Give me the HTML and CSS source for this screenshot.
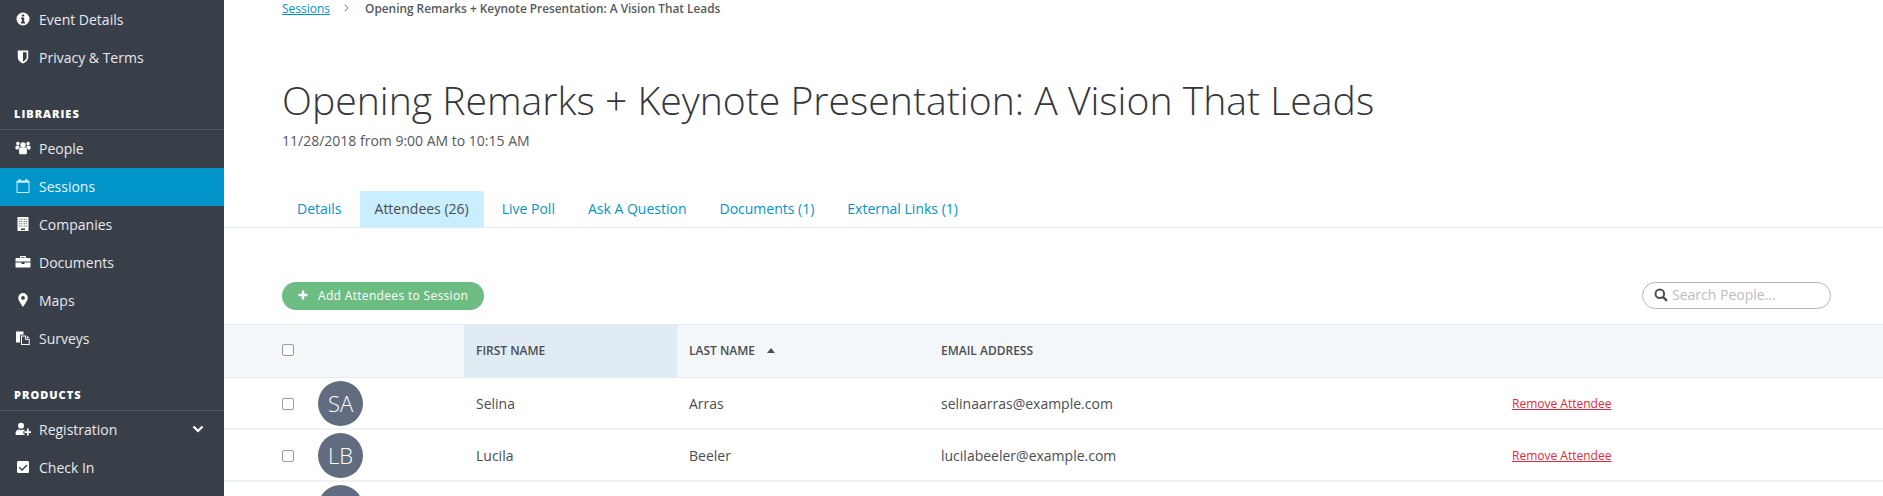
FILE: index.html
```html
<!DOCTYPE html>
<html lang="en">
<head>
<meta charset="utf-8">
<title>Session Attendees</title>
<link rel="stylesheet" href="styles.css">
</head>
<body>
<div class="app">
  <nav class="sidebar">
    <ul class="nav first">
      <li class="item"><svg class="ico" viewBox="0 0 16 16"><path fill="#fff" fill-rule="evenodd" d="M8 1.500a6.500 6.500 0 1 0 0 13 6.500 6.500 0 0 0 0-13zM6.800 3.400h2.400v2.100H6.800zM6 6.500h3.200v4.600h.9v1.500H5.900v-1.500h.9V8H6z"/></svg><span>Event Details</span></li>
      <li class="item"><svg class="ico" viewBox="0 0 16 16"><path fill="#fff" fill-rule="evenodd" d="M2.800 1.500h10.400v6.800c0 3-2.500 5.200-5.200 6.200-2.700-1-5.200-3.200-5.200-6.200zM8 3.200v9.500c1.900-.9 3.600-2.400 3.600-4.400V3.200z"/></svg><span>Privacy &amp; Terms</span></li>
    </ul>
    <h2 class="section">LIBRARIES</h2>
    <ul class="nav">
      <li class="item"><svg class="ico" viewBox="0 0 16 16"><g fill="#fff"><circle cx="8" cy="5" r="2.700"/><circle cx="2.900" cy="3.600" r="1.800"/><circle cx="13.100" cy="3.600" r="1.800"/><path d="M4.100 9.300c0-1 .8-1.700 1.700-1.700h4.400c.9 0 1.700.7 1.700 1.700v4c0 .5-.4.900-.9.900H5c-.5 0-.9-.4-.9-.9z"/><path d="M.5 7c0-.8.600-1.300 1.300-1.300h2.300c.2.800.6 1.300 1 1.600-1.100.3-1.700 1.100-1.700 2.200H1.300c-.5 0-.8-.3-.8-.8zM15.500 7c0-.8-.6-1.300-1.300-1.300h-2.300c-.2.800-.6 1.300-1 1.600 1.100.3 1.700 1.100 1.700 2.200h2.100c.5 0 .8-.3.800-.8z"/></g></svg><span>People</span></li>
      <li class="item active"><svg class="ico" viewBox="0 0 16 16"><g fill="#cdeefb"><path fill-rule="evenodd" d="M1.500 3.500c0-.6.400-1 1-1h11c.6 0 1 .4 1 1V14c0 .6-.4 1-1 1h-11c-.6 0-1-.4-1-1zM2.500 4.800V14h11V4.800z"/><rect x="3.700" y="1" width="2" height="3" rx=".8"/><rect x="10.300" y="1" width="2" height="3" rx=".8"/></g></svg><span>Sessions</span></li>
      <li class="item"><svg class="ico" viewBox="0 0 16 16"><path fill="#fff" fill-rule="evenodd" d="M2.500 1h11v14h-11zM6 12.600v1.400h4v-1.400zM4.300 2.700v1h1v-1zM6.300 2.700v1h1v-1zM8.700 2.700v1h1v-1zM10.700 2.700v1h1v-1zM4.300 5v1h1V5zM6.300 5v1h1V5zM8.700 5v1h1V5zM10.700 5v1h1V5zM4.300 7.300v1h1v-1zM6.300 7.300v1h1v-1zM8.700 7.300v1h1v-1zM10.700 7.300v1h1v-1zM4.300 9.600v1h1v-1zM6.300 9.600v1h1v-1zM8.700 9.600v1h1v-1zM10.700 9.600v1h1v-1z"/></svg><span>Companies</span></li>
      <li class="item"><svg class="ico" viewBox="0 0 16 16"><g fill="#fff"><path d="M5 4V2.800c0-.5.400-.8.800-.8h4.400c.4 0 .8.300.8.800V4h-1.300V3.200H6.300V4z"/><path d="M.5 5c0-.6.400-1 1-1h13c.6 0 1 .4 1 1v2.600H.5z"/><path d="M.5 8.500h6V10h3V8.500h6v4c0 .6-.4 1-1 1h-13c-.6 0-1-.4-1-1z"/></g></svg><span>Documents</span></li>
      <li class="item"><svg class="ico" viewBox="0 0 16 16"><path fill="#fff" fill-rule="evenodd" d="M8 1a4.800 4.800 0 0 0-4.800 4.800c0 2.500 3 6.700 4.800 9.200 1.800-2.500 4.800-6.700 4.800-9.200A4.800 4.800 0 0 0 8 1zm0 3a1.900 1.900 0 1 1 0 3.800A1.900 1.900 0 0 1 8 4z"/></svg><span>Maps</span></li>
      <li class="item"><svg class="ico" viewBox="0 0 16 16"><g fill="#fff"><path d="M1 1.500h7.500v3H6.300C5.600 4.500 5 5 5 5.800v6.700H1z"/><path fill-rule="evenodd" d="M6 5.500h5v3.300h3.700V15H6zM7 6.500V14h6.700V9.800H10V6.500z"/><path d="M11.800 5.700l2.700 2.300h-2.700z"/></g></svg><span>Surveys</span></li>
    </ul>
    <h2 class="section">PRODUCTS</h2>
    <ul class="nav">
      <li class="item"><svg class="ico" viewBox="0 0 16 16"><g fill="#fff"><circle cx="6" cy="4.800" r="3"/><path d="M.5 12.800c0-2.600 1.700-4.300 3.300-4.300.7.400 1.400.6 2.200.6s1.500-.2 2.200-.6c.5 0 1 .2 1.400.5v1.300H8.300v2.400h1.300v1.300H1.500c-.6 0-1-.4-1-1.200z"/><path d="M12 7.500h1.700v2.700h2.300v1.700h-2.300v2.600H12v-2.600H9.400v-1.700H12z"/></g></svg><span>Registration</span><svg class="chev" viewBox="0 0 12 8"><path d="M1.500 1.500L6 6l4.500-4.500" fill="none" stroke="#fff" stroke-width="2.200"/></svg></li>
      <li class="item"><svg class="ico" viewBox="0 0 16 16"><path fill="#fff" fill-rule="evenodd" d="M3.500 2h9c1 0 1.500.6 1.500 1.500v9c0 1-.6 1.500-1.500 1.500h-9C2.500 14 2 13.400 2 12.500v-9C2 2.500 2.600 2 3.500 2zm8 3.600L7 10 4.800 7.800l-1 1 3.200 3.200 5.500-5.500z"/></svg><span>Check In</span></li>
    </ul>
  </nav>

  <main class="main">
    <div class="crumbs"><a class="crumb-link" href="#">Sessions</a><svg class="crumb-sep" viewBox="0 0 5 8"><path d="M.8.8L4 4 .8 7.200" fill="none" stroke="#666" stroke-width=".9"/></svg><span class="crumb-current">Opening Remarks + Keynote Presentation: A Vision That Leads</span></div>
    <h1 class="title">Opening Remarks + Keynote Presentation: A Vision That Leads</h1>
    <p class="date">11/28/2018 from 9:00 AM to 10:15 AM</p>
    <div class="tabs">
      <a class="tab" href="#">Details</a>
      <a class="tab selected" href="#">Attendees (26)</a>
      <a class="tab" href="#">Live Poll</a>
      <a class="tab" href="#">Ask A Question</a>
      <a class="tab" href="#">Documents (1)</a>
      <a class="tab" href="#">External Links (1)</a>
    </div>
    <div class="toolbar">
      <button class="add-btn"><svg class="plus" viewBox="0 0 10 10"><path d="M5 .5v9M.5 5h9" stroke="#fff" stroke-width="2.400"/></svg>Add Attendees to Session</button>
      <label class="search"><svg class="search-ico" viewBox="0 0 14 14"><circle cx="5.800" cy="5.800" r="4.300" fill="none" stroke="#4a4d52" stroke-width="2"/><path d="M8.900 8.900l4 4" stroke="#4a4d52" stroke-width="2.200"/></svg><span class="placeholder">Search People...</span></label>
    </div>
    <div class="table">
      <div class="row head">
        <div class="cell check-cell"><span class="box"></span></div>
        <div class="cell sorted">FIRST NAME</div>
        <div class="cell">LAST NAME<svg class="caret" viewBox="0 0 8 5"><path d="M4 0l4 5H0z" fill="#4a4d52"/></svg></div>
        <div class="cell">EMAIL ADDRESS</div>
        <div class="cell"></div>
      </div>
      <div class="row">
        <div class="cell check-cell"><span class="box"></span><span class="avatar">SA</span></div>
        <div class="cell">Selina</div>
        <div class="cell">Arras</div>
        <div class="cell">selinaarras@example.com</div>
        <div class="cell"><a class="remove" href="#">Remove Attendee</a></div>
      </div>
      <div class="row">
        <div class="cell check-cell"><span class="box"></span><span class="avatar">LB</span></div>
        <div class="cell">Lucila</div>
        <div class="cell">Beeler</div>
        <div class="cell">lucilabeeler@example.com</div>
        <div class="cell"><a class="remove" href="#">Remove Attendee</a></div>
      </div>
      <div class="row">
        <div class="cell check-cell"><span class="avatar spacer"></span></div>
      </div>
    </div>
  </main>
</div>
</body>
</html>
```
FILE: styles.css
```css
* { box-sizing: border-box; }
html, body { margin: 0; height: 496px; overflow: hidden; }
body { font-family: "Open Sans", sans-serif; color: #4a4d52; background: #fff; }
.app { display: flex; height: 496px; overflow: hidden; }

.sidebar { flex: 0 0 224px; background: #393f49; color: #fff; }
.nav { list-style: none; margin: 0; padding: 0; }
.item { display: flex; align-items: center; height: 38px; padding: 0 0 2px 15px; font-size: 14px; color: #e8eaed; }
.item.active { background: #0094c8; color: #e6f6fc; }
.ico { width: 16px; height: 16px; margin-right: 8px; flex: none; }
.chev { width: 12px; height: 8px; margin-left: auto; margin-right: 20px; }
.section { margin: 23px 0 0; padding: 0 0 0 14px; height: 30px; line-height: 28px; font-size: 11px; font-weight: 800; letter-spacing: 1px; color: #fff; border-bottom: 1px solid #525863; }
.nav:first-child { padding-top: 1px; }

.main { flex: 1; min-width: 0; }
.crumbs { display: flex; align-items: center; height: 16px; padding-left: 58px; font-size: 12px; }
.crumb-link { color: #0094c8; }
.crumb-sep { width: 5px; height: 8px; margin: 0 16px 0 14px; flex: none; }
.crumb-current { font-size: 11.85px; font-weight: 600; color: #55585c; }
.title { margin: 62px 0 0 58px; font-size: 39.15px; line-height: 44px; font-weight: 300; color: #33363b; white-space: nowrap; }
.date { margin: 9px 0 0 58px; font-size: 14px; line-height: 20px; color: #55585c; }

.tabs { display: flex; margin-top: 40px; padding-left: 58px; height: 37px; border-bottom: 1px solid #e4ebf2; }
.tab { display: block; padding: 0 15px; margin-right: 3px; height: 36px; line-height: 36px; font-size: 14px; color: #0094c8; text-decoration: none; border-radius: 2px 2px 0 0; }
.tab.selected { background: #c9eefd; color: #4a4d52; }

.toolbar { display: flex; justify-content: space-between; align-items: flex-start; padding: 54px 52px 0 58px; height: 96px; }
.add-btn { display: flex; align-items: center; height: 28px; width: 202px; padding: 0 0 2px 16px; border: 0; border-radius: 14px; background: #6dbd83; color: #fff; font: 12px "Open Sans", sans-serif; letter-spacing: .33px; }
.plus { width: 10px; height: 10px; margin-right: 10px; flex: none; }
.search { display: flex; align-items: center; width: 189px; height: 27px; padding: 0 0 2px 11px; border: 1px solid #b5b5b5; border-radius: 14px; }
.search-ico { width: 14px; height: 14px; margin-right: 4px; }
.placeholder { font-size: 14px; color: #bdbdbd; }

.row { display: grid; grid-template-columns: 240px 213px 252px 571px 1fr; height: 52px; align-items: center; border-bottom: 2px solid #f0f2f5; font-size: 14px; }
.row.head { height: 54px; background: #f3f7fa; border-top: 1px solid #e3ebf3; border-bottom: 1px solid #e3ebf3; align-items: stretch; font-size: 12px; font-weight: 600; }
.cell { display: flex; align-items: center; padding-left: 12px; min-width: 0; height: 100%; }
.cell.sorted { background: #e1ebf4; }
.cell.check-cell { padding-left: 58px; }
.row.head .cell { padding-bottom: 2px; }
.box { width: 12px; height: 12px; margin-top: 2px; border: 1px solid #9a9a9a; border-radius: 2px; background: #fff; flex: none; }
.row.head .box { margin-top: 0; }
.avatar { display: flex; align-items: center; justify-content: center; width: 45px; height: 45px; margin-left: 24px; border-radius: 50%; background: #626c80; color: #fff; font-size: 22px; font-weight: 300; flex: none; }
.avatar.spacer { margin-left: 36px; }
.caret { width: 8px; height: 5px; margin-left: 12px; }
.remove { color: #e2283c; font-size: 12px; }
```
